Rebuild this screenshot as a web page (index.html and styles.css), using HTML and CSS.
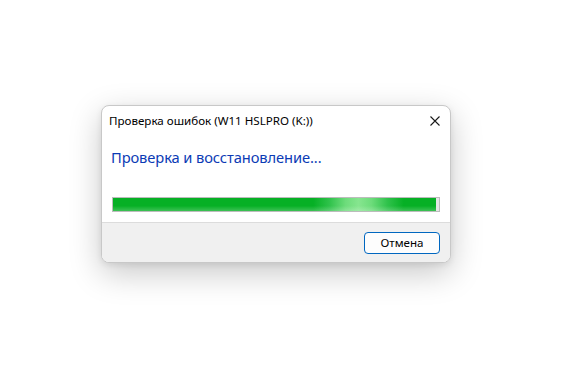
FILE: index.html
```html
<!DOCTYPE html>
<html lang="ru">
<head>
<meta charset="utf-8">
<link rel="stylesheet" href="styles.css">
</head>
<body>
<div class="stage">
  <div class="dialog">
    <div class="titlebar">
      <span class="title">Проверка ошибок (W11 HSLPRO (K:))</span>
      <svg class="close" width="10" height="10" viewBox="0 0 10 10"><path d="M0.5 0.5 L9.5 9.5 M9.5 0.5 L0.5 9.5" stroke="#1a1a1a" stroke-width="1.1" fill="none"/></svg>
    </div>
    <div class="content">
      <div class="heading">Проверка и восстановление...</div>
      <div class="progress"><div class="fill" style="width: 99%"></div></div>
    </div>
    <div class="footer">
      <button class="btn">Отмена</button>
    </div>
  </div>
</div>
</body>
</html>
```
FILE: styles.css
```css
html, body {
  margin: 0;
  padding: 0;
  background: #ffffff;
}
body {
  width: 563px;
  height: 365px;
  overflow: hidden;
  font-family: "Noto Sans", "Open Sans", sans-serif;
}
.stage {
  padding: 105px 0 0 101px;
}
.dialog {
  width: 348px;
  height: 156px;
  border: 1px solid #c8c8c8;
  border-radius: 8px;
  background: #ffffff;
  box-shadow: 0 10px 32px rgba(0,0,0,0.22), 0 2px 6px rgba(0,0,0,0.08);
  overflow: hidden;
  display: flex;
  flex-direction: column;
}
.titlebar {
  height: 29px;
  display: flex;
  align-items: center;
  justify-content: space-between;
  padding: 0 10px 0 7px;
}
.title {
  font-size: 11.6px;
  color: #000;
}
.close {
  display: block;
  margin-top: 1px;
}
.content {
  flex: 1;
  padding: 12px 10px 0 9px;
}
.heading {
  font-size: 14.7px;
  color: #0b3bb5;
  line-height: 20px;
  letter-spacing: -0.1px;
}
.progress {
  margin-top: 30px;
  margin-left: 1px;
  height: 13px;
  border: 1px solid #bcbcbc;
  background: #e6e6e6;
}
.fill {
  height: 100%;
  background:
    linear-gradient(180deg, rgba(255,255,255,0) 0%, rgba(255,255,255,0) 60%, rgba(255,255,255,0.22) 100%),
    linear-gradient(90deg, #06b025 0%, #06b025 62%, #2fc24b 67%, #6ddc7b 72%, #86e58f 76%, #6ddc7b 80%, #2fc24b 85%, #06b025 90%, #06b025 100%);
}
.footer {
  height: 40px;
  border-top: 1px solid #dcdcdc;
  background: #f0f0f0;
  display: flex;
  justify-content: flex-end;
  align-items: flex-start;
  padding: 9px 10px 0 0;
  box-sizing: border-box;
}
.btn {
  width: 76px;
  height: 22px;
  border: 1px solid #0067c0;
  border-radius: 4px;
  background: #fdfdfd;
  font-family: "Noto Sans", "Open Sans", sans-serif;
  font-size: 11.6px;
  color: #000;
  padding: 0;
  line-height: 18px;
}
```
